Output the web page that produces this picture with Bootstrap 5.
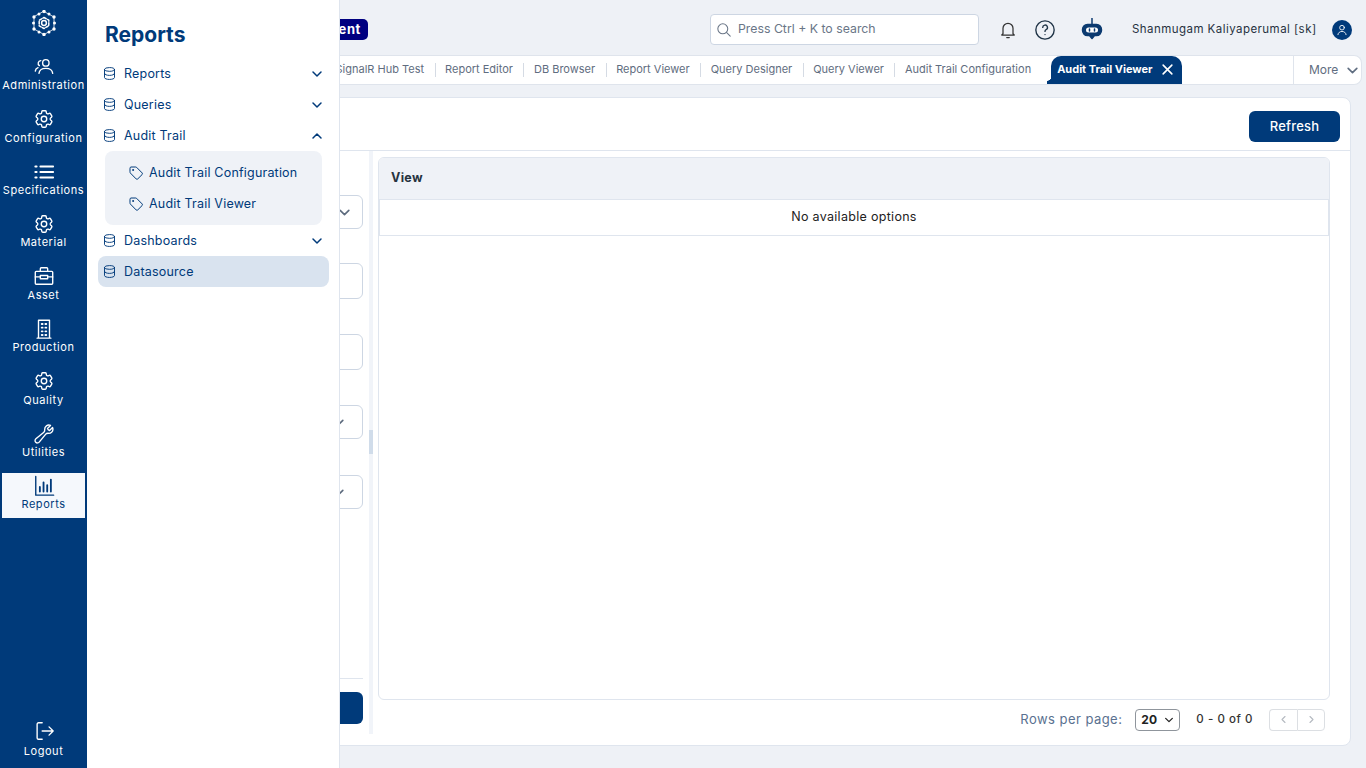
<!DOCTYPE html>
<html lang="en">
<head>
  <meta charset="UTF-8" />
  <meta name="viewport" content="width=device-width, initial-scale=1" />
  <title>Audit Trail Viewer</title>
  <link href="https://cdn.jsdelivr.net/npm/bootstrap@5.3.0/dist/css/bootstrap.min.css" rel="stylesheet" />
  <style>
    body {
      font-family: Inter, "Open Sans", sans-serif;
      background: #eef1f6;
      height: 100vh;
      overflow: hidden;
      color: #1f2d3d;
    }
    svg { display: block; flex-shrink: 0; fill: none; stroke: currentColor; stroke-width: 1.5; stroke-linecap: round; stroke-linejoin: round; }

    /* left rail */
    .rail { width: 87px; background: #003a7a; color: #fff; z-index: 3; }
    .rail-logo { height: 53.8px; padding-top: 10px; }
    .rail-item { height: 45px; margin: 0 2px 7.4px; font-size: 11px; letter-spacing: .55px; white-space: nowrap; padding-top: 2px; color: #fff; text-decoration: none; }
    .rail-item.active { background: #f5f8fc; color: #003a7a; }
    .rail-item span { margin-top: -.5px; line-height: 16px; }
    .rail-logout { margin-top: auto; margin-bottom: 3px; padding-top: 0; }
    .rail-logout span { margin-top: 1px; }

    /* flyout menu */
    .flyout { position: absolute; left: 87px; top: 0; bottom: 0; width: 253px; background: #fff; border-right: 1px solid #dfe5ee; color: #003a7a; z-index: 2; }
    .flyout h1 { font-size: 21px; font-weight: 700; padding-top: 1px; margin: 20px 0 9px 18px; line-height: 28px; }
    .menu-row { height: 31px; margin: 0 10px 0 11px; padding: 0 6px 0 4px; font-size: 12.5px; letter-spacing: .2px; border-radius: 8px; }
    .menu-row .menu-label { margin-left: 7px; padding-top: 2px; }
    .menu-row.current { background: #d9e3ef; }
    .menu-sub { background: #eff2f7; border-radius: 8px; margin: 0 17px 0 18px; padding: 6px 0; }
    .menu-sub .menu-row { margin: 0; padding: 0 0 0 23px; }
    .menu-sub .menu-label { margin-left: 5px; }

    /* top */
    .main-area { margin-left: 87px; min-width: 0; }
    .top-bar { height: 55px; padding-top: 4px; }
    .env-wrap { width: 281px; margin-top: -4px; }
    .env-pill { background: #000080; color: #fff; font-size: 13px; font-weight: 700; letter-spacing: .6px; border-radius: 5px; padding: 1px 7px; line-height: 19px; }
    .search-box { width: 269px; height: 31px; margin-left: 342px; background: #fff; border: 1px solid #cdd6e3; border-radius: 4px; color: #6a7687; font-size: 12.3px; padding-left: 4px; }
    .search-box span { margin-left: 2px; }
    .icon-bell { margin-left: 19px; color: #333; }
    .icon-help { margin-left: 16px; color: #1f3346; }
    .icon-bot { margin-left: 24px; color: #0b3a70; }
    .user-name { font-size: 11.5px; letter-spacing: .45px; color: #27323f; margin-left: 28px; width: 185px; }
    .user-pic { width: 20px; height: 20px; border-radius: 50%; background: #003a7a; color: #fff; margin-left: 15px; }

    /* tabs */
    .tab-strip { height: 30px; background: #fff; border: 1px solid #dfe4ec; border-left: 0; border-radius: 0 8px 8px 0; margin-right: 4px; font-size: 11px; color: #5f6d80; overflow: hidden; }
    .tab-item { position: relative; padding: 0 10.5px; white-space: nowrap; margin-top: -2px; }
    .tab-first { margin-left: 238px; }
    .tab-item + .tab-item::before { content: ""; position: absolute; left: 0; top: 2px; height: 14px; width: 1px; background: #d5dbe4; }
    .tab-active { position: relative; background: #003a7a; color: #fff; font-weight: 700; font-size: 11px; border-radius: 10px 10px 0 0; height: 29px; width: 131px; margin-left: 9.5px; padding: 0 0 2px 6px; white-space: nowrap; }
    .tab-active::before { content: ""; position: absolute; left: -4px; bottom: 0; width: 5px; height: 9px; background: radial-gradient(circle at 0 0, transparent 4.5px, #003a7a 5px); }
    .tab-more { margin-left: auto; width: 68px; height: 100%; border-left: 1px solid #dfe4ec; font-size: 12px; padding-left: 15px; }

    /* page card */
    .page-card { position: absolute; left: 100px; right: 15px; top: 97px; bottom: 22px; background: #fff; border: 1px solid #dfe5ee; border-radius: 8px; }
    .page-head { height: 53px; border-bottom: 1px solid #dfe5ee; padding-right: 10px; padding-top: 5px; }
    .btn-navy { background: #003a7a; color: #fff; border: 0; border-radius: 6px; font-size: 13px; font-weight: 500; letter-spacing: .2px; }
    .btn-navy:hover { background: #003a7a; color: #fff; }
    .btn-refresh { width: 91px; height: 31px; padding: 0; }
    .filter-pane { width: 268px; padding: 44px 6px 21px 0; }
    .filter-box { display: flex; align-items: center; justify-content: flex-end; border: 1px solid #cdd6e3; border-radius: 6px; height: 34px; margin-bottom: 34px; padding-right: 11px; color: #5d6b7e; background: #fff; }
    .filter-box.tall { height: 36px; margin-bottom: 35px; }
    .filter-box.wide-gap { margin-bottom: 36px; }
    .filter-box.low-chevron svg { margin-right: 6px; }
    .filter-foot { margin-top: auto; border-top: 1px solid #dfe5ee; padding-top: 13px; }
    .filter-foot .btn-navy { height: 32px; width: 100%; display: block; }
    .split-bar { width: 4px; background: #f1f4f9; position: relative; margin-bottom: 11px; }
    .split-thumb { position: absolute; left: 0; top: 279px; width: 4px; height: 24px; background: #d0dcea; }
    .view-side { padding: 6px 20px 0 5px; min-width: 0; }
    .view-panel { border: 1px solid #dfe5ee; border-radius: 6px; height: 543px; overflow: hidden; }
    .view-head { height: 42px; background: #eff2f7; border-bottom: 1px solid #dfe5ee; padding-left: 12px; font-size: 12.5px; font-weight: 700; letter-spacing: .3px; color: #263340; }
    .view-empty { height: 36px; border: 1px solid #dfe5ee; border-top: 0; font-size: 12.5px; letter-spacing: .3px; color: #222; padding-bottom: 1px; }
    .pager { height: 40px; font-size: 12.5px; padding-right: 5px; padding-bottom: 1px; }
    .pager-label { color: #5a7190; letter-spacing: .45px; margin-right: 13px; font-size: 13px; }
    .pager-select { width: 45px; height: 22px; border: 1px solid #8f959c; border-radius: 4px; padding: 0 5px; font-size: 12px; font-weight: 700; color: #222; }
    .pager-count { margin: 0 16px; font-size: 11.5px; letter-spacing: .55px; color: #333; font-weight: 500; }
    .pager-btn { width: 28px; height: 22px; border: 1px solid #dcdfe3; color: #b5bac1; }
    .pager-btn.first { border-radius: 4px 0 0 4px; border-right-width: 0; }
    .pager-btn.last { border-radius: 0 4px 4px 0; }
  </style>
</head>
<body class="d-flex position-relative">

  <svg width="0" height="0" class="position-absolute">
    <symbol id="i-gear" viewBox="0 0 24 24"><path d="M9.594 3.94c.09-.542.56-.94 1.11-.94h2.593c.55 0 1.02.398 1.11.94l.213 1.281c.063.374.313.686.645.87.074.04.147.083.22.127.325.196.72.257 1.075.124l1.217-.456a1.125 1.125 0 0 1 1.37.49l1.296 2.247a1.125 1.125 0 0 1-.26 1.431l-1.003.827c-.293.241-.438.613-.43.992a7.723 7.723 0 0 1 0 .255c-.008.378.137.75.43.991l1.004.827c.424.35.534.955.26 1.43l-1.298 2.247a1.125 1.125 0 0 1-1.369.491l-1.217-.456c-.355-.133-.75-.072-1.076.124a6.47 6.47 0 0 1-.22.128c-.331.183-.581.495-.644.869l-.213 1.281c-.09.543-.56.94-1.11.94h-2.594c-.55 0-1.019-.398-1.11-.94l-.213-1.281c-.062-.374-.312-.686-.644-.87a6.52 6.52 0 0 1-.22-.127c-.325-.196-.72-.257-1.076-.124l-1.217.456a1.125 1.125 0 0 1-1.369-.49l-1.297-2.247a1.125 1.125 0 0 1 .26-1.431l1.004-.827c.292-.24.437-.613.43-.991a6.932 6.932 0 0 1 0-.255c.007-.38-.138-.751-.43-.992l-1.004-.827a1.125 1.125 0 0 1-.26-1.43l1.297-2.247a1.125 1.125 0 0 1 1.37-.491l1.216.456c.356.133.751.072 1.076-.124.072-.044.146-.086.22-.128.332-.183.582-.495.644-.869l.214-1.28Z"/><circle cx="12" cy="12" r="3"/></symbol>
    <symbol id="i-users" viewBox="0 0 24 24"><circle cx="14" cy="7.500" r="3.500"/><path d="M6.500 19c.4-3.500 3.300-5.500 7.500-5.500s7.100 2 7.500 5.500"/><path d="M8.500 5A3 3 0 0 0 7 10.500"/><path d="M2.500 16.500c.2-1.900 1.400-3.200 3-3.800"/></symbol>
    <symbol id="i-list" viewBox="0 0 24 24"><path d="M8 6h14M8 12h14M8 18h14M2.500 6h1.500M2.500 12h1.500M2.500 18h1.500" stroke-width="2"/></symbol>
    <symbol id="i-case" viewBox="0 0 24 24"><rect x="2.500" y="7" width="19" height="14" rx="1"/><path d="M8 7V4a1 1 0 0 1 1-1h6a1 1 0 0 1 1 1v3M2.500 13h5.500M16 13h5.500M8 11.500h8v3.500H8z"/></symbol>
    <symbol id="i-building" viewBox="0 0 24 24"><path d="M6 22V2.500h12V22M4.500 22h15"/><path d="M9.500 6.500h1M13.500 6.500h1M9.500 10.500h1M13.500 10.500h1M9.500 14.500h1M13.500 14.500h1M9.500 18.500h1M13.500 18.500h1" stroke-width="2"/></symbol>
    <symbol id="i-wrench" viewBox="0 0 24 24"><path d="M21.750 6.750a4.500 4.500 0 0 1-4.884 4.484c-1.076-.091-2.264.071-2.950.904l-7.152 8.684a2.548 2.548 0 1 1-3.586-3.586l8.684-7.152c.833-.686.995-1.874.904-2.950a4.500 4.500 0 0 1 6.336-4.486l-3.276 3.276a3.004 3.004 0 0 0 2.250 2.250l3.276-3.276c.256.565.398 1.192.398 1.852Z"/></symbol>
    <symbol id="i-chart" viewBox="0 0 24 24"><path d="M3 1.500V22h19.500" /><path d="M7.500 18v-5M11.500 18V8M15.500 18v-7M19.500 18V5" stroke-width="2"/></symbol>
    <symbol id="i-logout" viewBox="0 0 24 24"><path d="M10 3H6a1.500 1.500 0 0 0-1.500 1.500v15A1.500 1.500 0 0 0 6 21h4M10 12h12M17.500 7.500 22 12l-4.500 4.500"/></symbol>
    <symbol id="i-db" viewBox="0 0 24 24"><ellipse cx="12" cy="5.500" rx="8" ry="3"/><path d="M4 5.500v13c0 1.700 3.600 3 8 3s8-1.300 8-3v-13M4 12c0 1.700 3.600 3 8 3s8-1.300 8-3"/></symbol>
    <symbol id="i-tag" viewBox="0 0 24 24"><path d="M3 4.500A1.500 1.500 0 0 1 4.500 3h7.100c.5 0 1 .2 1.300.5l8.300 8.400c.7.700.7 1.700 0 2.400l-6.600 6.600c-.7.700-1.700.7-2.400 0L3.600 12.100a2 2 0 0 1-.6-1.400z"/><circle cx="7.500" cy="7.500" r=".8"/></symbol>
    <symbol id="i-down" viewBox="0 0 12 12"><path d="m2 4 4 4 4-4"/></symbol>
    <symbol id="i-up" viewBox="0 0 12 12"><path d="m2 8 4-4 4 4"/></symbol>
  </svg>

  <!-- Left rail -->
  <nav class="rail position-absolute top-0 bottom-0 start-0 d-flex flex-column">
    <div class="rail-logo d-flex justify-content-center">
      <svg width="26" height="26" viewBox="0 0 26 26" stroke-width="1">
        <circle cx="13" cy="13" r="2.400" stroke-width="1.500"/>
        <path d="M13 7.500 17.800 10.200v5.600L13 18.500l-4.800-2.700v-5.600z" stroke-dasharray="2.500 1.500" stroke-width="1.500"/>
        <path d="M13 1.500 23 7v12l-10 5.500L3 19V7z" stroke-width=".8"/>
        <g fill="#fff" stroke="none">
          <circle cx="13" cy="1.500" r="1.700"/><circle cx="18" cy="4" r="1.500"/><circle cx="23" cy="7" r="1.700"/><circle cx="23.500" cy="13" r="1.500"/><circle cx="23" cy="19" r="1.700"/><circle cx="18" cy="22" r="1.500"/><circle cx="13" cy="24.500" r="1.700"/><circle cx="8" cy="22" r="1.500"/><circle cx="3" cy="19" r="1.700"/><circle cx="2.500" cy="13" r="1.500"/><circle cx="3" cy="7" r="1.700"/><circle cx="8" cy="4" r="1.500"/>
        </g>
      </svg>
    </div>
    <a class="rail-item d-flex flex-column align-items-center"><svg width="22" height="22"><use href="#i-users"/></svg><span>Administration</span></a>
    <a class="rail-item d-flex flex-column align-items-center"><svg width="22" height="22"><use href="#i-gear"/></svg><span>Configuration</span></a>
    <a class="rail-item d-flex flex-column align-items-center"><svg width="22" height="22"><use href="#i-list"/></svg><span>Specifications</span></a>
    <a class="rail-item d-flex flex-column align-items-center"><svg width="22" height="22"><use href="#i-gear"/></svg><span>Material</span></a>
    <a class="rail-item d-flex flex-column align-items-center"><svg width="22" height="22"><use href="#i-case"/></svg><span>Asset</span></a>
    <a class="rail-item d-flex flex-column align-items-center"><svg width="22" height="22"><use href="#i-building"/></svg><span>Production</span></a>
    <a class="rail-item d-flex flex-column align-items-center"><svg width="22" height="22"><use href="#i-gear"/></svg><span>Quality</span></a>
    <a class="rail-item d-flex flex-column align-items-center"><svg width="22" height="22"><use href="#i-wrench"/></svg><span>Utilities</span></a>
    <a class="rail-item active d-flex flex-column align-items-center"><svg width="22" height="22"><use href="#i-chart"/></svg><span>Reports</span></a>
    <a class="rail-item rail-logout d-flex flex-column align-items-center"><svg width="22" height="22"><use href="#i-logout"/></svg><span>Logout</span></a>
  </nav>

  <!-- Flyout menu -->
  <aside class="flyout">
    <h1>Reports</h1>
    <div class="menu-row d-flex align-items-center"><svg width="15" height="15"><use href="#i-db"/></svg><span class="menu-label flex-grow-1">Reports</span><svg width="12" height="12" stroke-width="2"><use href="#i-down"/></svg></div>
    <div class="menu-row d-flex align-items-center"><svg width="15" height="15"><use href="#i-db"/></svg><span class="menu-label flex-grow-1">Queries</span><svg width="12" height="12" stroke-width="2"><use href="#i-down"/></svg></div>
    <div class="menu-row d-flex align-items-center"><svg width="15" height="15"><use href="#i-db"/></svg><span class="menu-label flex-grow-1">Audit Trail</span><svg width="12" height="12" stroke-width="2"><use href="#i-up"/></svg></div>
    <div class="menu-sub">
      <div class="menu-row d-flex align-items-center"><svg width="16" height="16"><use href="#i-tag"/></svg><span class="menu-label">Audit Trail Configuration</span></div>
      <div class="menu-row d-flex align-items-center"><svg width="16" height="16"><use href="#i-tag"/></svg><span class="menu-label">Audit Trail Viewer</span></div>
    </div>
    <div class="menu-row d-flex align-items-center"><svg width="15" height="15"><use href="#i-db"/></svg><span class="menu-label flex-grow-1">Dashboards</span><svg width="12" height="12" stroke-width="2"><use href="#i-down"/></svg></div>
    <div class="menu-row current d-flex align-items-center"><svg width="15" height="15"><use href="#i-db"/></svg><span class="menu-label flex-grow-1">Datasource</span></div>
  </aside>

  <!-- Main area -->
  <div class="main-area flex-grow-1 d-flex flex-column">
    <header class="top-bar d-flex align-items-center flex-shrink-0">
      <div class="env-wrap text-end"><span class="env-pill d-inline-block">Development</span></div>
      <div class="search-box d-flex align-items-center gap-1">
        <svg width="17" height="17" viewBox="0 0 24 24"><circle cx="11" cy="11" r="7"/><path d="m16.500 16.500 5 5"/></svg>
        <span>Press Ctrl + K to search</span>
      </div>
      <svg class="icon-bell" width="20" height="20" viewBox="0 0 24 24"><path d="M6 16.500V10a6 6 0 0 1 12 0v6.500l1.500 1.500h-15zM10.500 21h3"/></svg>
      <svg class="icon-help" width="22" height="22" viewBox="0 0 24 24"><circle cx="12" cy="12" r="10"/><path d="M9.500 9.200a2.600 2.600 0 1 1 3.800 2.300c-.8.500-1.300 1-1.300 2M12 17h.01"/></svg>
      <svg class="icon-bot" width="24" height="24" viewBox="0 0 24 24"><path d="M12 .5V6"/><path fill="currentColor" d="M7.500 6.500h9c2.900 0 5 2.400 5 5.500s-2.100 5.500-5 5.500h-2L12 20.500l-2.500-3h-2c-2.900 0-5-2.400-5-5.500s2.100-5.500 5-5.500z"/><rect x="6" y="9.500" width="12" height="5" rx="2.500" fill="#fff" stroke="none"/><path d="M9.500 11v2M14.500 11v2" stroke-width="1.500"/></svg>
      <div class="user-name text-nowrap">Shanmugam Kaliyaperumal [sk]</div>
      <div class="user-pic d-flex align-items-center justify-content-center"><svg width="14" height="14" viewBox="0 0 24 24" stroke-width="2"><circle cx="12" cy="8" r="4"/><path d="M5 20c.5-3.500 3.300-5.500 7-5.500s6.500 2 7 5.500"/></svg></div>
    </header>

    <div class="tab-strip d-flex align-items-center flex-shrink-0">
      <div class="tab-item tab-first">SignalR Hub Test</div>
      <div class="tab-item">Report Editor</div>
      <div class="tab-item">DB Browser</div>
      <div class="tab-item">Report Viewer</div>
      <div class="tab-item">Query Designer</div>
      <div class="tab-item">Query Viewer</div>
      <div class="tab-item">Audit Trail Configuration</div>
      <div class="tab-active d-flex align-items-center justify-content-between">
        <span>Audit Trail Viewer</span>
        <svg class="me-2" width="13" height="13" viewBox="0 0 12 12"><path d="m2 2 8 8M10 2l-8 8"/></svg>
      </div>
      <div class="tab-more d-flex align-items-center gap-2">More <svg width="13" height="13"><use href="#i-down"/></svg></div>
    </div>

    <section class="page-card d-flex flex-column">
      <div class="page-head d-flex align-items-center justify-content-end flex-shrink-0">
        <button class="btn btn-navy btn-refresh">Refresh</button>
      </div>
      <div class="d-flex flex-grow-1" style="min-height:0">
        <div class="filter-pane d-flex flex-column flex-shrink-0">
          <div class="filter-box"><svg width="13" height="13"><use href="#i-down"/></svg></div>
          <div class="filter-box tall"></div>
          <div class="filter-box tall"></div>
          <div class="filter-box wide-gap low-chevron"><svg width="13" height="13"><use href="#i-down"/></svg></div>
          <div class="filter-box low-chevron"><svg width="13" height="13"><use href="#i-down"/></svg></div>
          <div class="filter-foot"><button class="btn btn-navy">Search</button></div>
        </div>
        <div class="split-bar flex-shrink-0"><div class="split-thumb"></div></div>
        <div class="view-side flex-grow-1 d-flex flex-column">
          <div class="view-panel">
            <div class="view-head d-flex align-items-center">View</div>
            <div class="view-empty d-flex align-items-center justify-content-center">No available options</div>
          </div>
          <div class="pager d-flex align-items-center justify-content-end">
            <span class="pager-label">Rows per page:</span>
            <div class="pager-select d-flex align-items-center justify-content-between">20 <svg width="10" height="10"><use href="#i-down"/></svg></div>
            <span class="pager-count">0 - 0 of 0</span>
            <div class="pager-btn first d-flex align-items-center justify-content-center"><svg width="9" height="9" viewBox="0 0 12 12"><path d="M8 2 4 6l4 4"/></svg></div>
            <div class="pager-btn last d-flex align-items-center justify-content-center"><svg width="9" height="9" viewBox="0 0 12 12"><path d="m4 2 4 4-4 4"/></svg></div>
          </div>
        </div>
      </div>
    </section>
  </div>

  <script src="https://cdn.jsdelivr.net/npm/bootstrap@5.3.0/dist/js/bootstrap.bundle.min.js"></script>
</body>
</html>
